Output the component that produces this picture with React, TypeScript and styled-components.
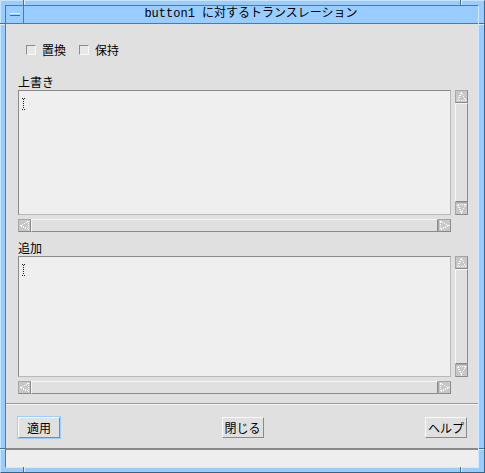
import styled, { createGlobalStyle } from "styled-components";

const GlobalStyle = createGlobalStyle`
  html, body {
    margin: 0;
    padding: 0;
    background: #99ccff;
  }
  body {
    font-family: "Noto Sans CJK JP", "DejaVu Sans", sans-serif;
    font-size: 12px;
    color: #000;
  }
`;

const Frame = styled.div`
  position: relative;
  box-sizing: border-box;
  width: 485px;
  height: 473px;
  background: #99ccff;
  border: 1px solid;
  border-color: #c6e3ff #40607f #40607f #c6e3ff;
  padding: 4px 5px 4px 4px;
  display: flex;
`;

const Notch = styled.div<{ $x: number; $y: number; $v?: boolean }>`
  position: absolute;
  left: ${(p) => p.$x - 1}px;
  top: ${(p) => p.$y - 1}px;
  width: ${(p) => (p.$v ? 2 : 5)}px;
  height: ${(p) => (p.$v ? 5 : 2)}px;
  box-sizing: border-box;
  ${(p) =>
    p.$v
      ? "border-left: 1px solid #4d6c8c; border-right: 1px solid #dcefff;"
      : "border-top: 1px solid #4d6c8c; border-bottom: 1px solid #dcefff;"}
`;

const Window = styled.div`
  flex: 1;
  min-width: 0;
  display: flex;
  flex-direction: column;
  border: 1px solid;
  border-color: #5a7896 #d2e9ff #d2e9ff #5a7896;
`;

const TitleBar = styled.div`
  height: 17px;
  display: flex;
  border-bottom: 1px solid #5a7896;
  background: #99ccff;
`;

const MenuButton = styled.div`
  width: 17px;
  border-right: 1px solid #5a7896;
  display: flex;
  align-items: center;
  justify-content: center;
`;

const MenuBar = styled.div`
  box-sizing: border-box;
  width: 10px;
  height: 3px;
  border-top: 1px solid #e6f3ff;
  border-bottom: 1px solid #4d6c8c;
  background: #99ccff;
`;

const Title = styled.div`
  flex: 1;
  text-align: center;
  line-height: 17px;
  font-family: "Liberation Mono", "Noto Sans CJK JP", monospace;
  font-size: 12px;
  white-space: nowrap;
`;

const Body = styled.div`
  flex: 1;
  display: flex;
  flex-direction: column;
  background: #e0e0e0;
  border-bottom: 2px solid #8a8a8a;
`;

const Content = styled.div`
  display: flex;
  flex-direction: column;
  padding: 18px 10px 0 12px;
`;

const CheckRow = styled.div`
  display: flex;
  align-items: center;
  height: 16px;
  padding-left: 8px;
  gap: 13px;
`;

const CheckItem = styled.label`
  display: flex;
  align-items: center;
  gap: 6px;
  line-height: 16px;
`;

const CheckBox = styled.span`
  box-sizing: border-box;
  width: 10px;
  height: 10px;
  background: #e8e8e8;
  border: 1px solid;
  border-color: #8c8c8c #f8f8f8 #f8f8f8 #8c8c8c;
`;

const Label = styled.div<{ $top: number }>`
  margin-top: ${(p) => p.$top}px;
  height: 17px;
  line-height: 17px;
`;

const TextRow = styled.div<{ $h: number }>`
  display: flex;
  gap: 4px;
  height: ${(p) => p.$h}px;
`;

const TextArea = styled.div`
  flex: 1;
  box-sizing: border-box;
  background: #efefef;
  border: 1px solid;
  border-color: #8a8a8a #b8b8b8 #b8b8b8 #8a8a8a;
  padding: 5px 2px;
`;

const Scroll = styled.div<{ $v?: boolean }>`
  display: flex;
  flex-direction: ${(p) => (p.$v ? "column" : "row")};
  box-sizing: border-box;
  ${(p) => (p.$v ? "width: 13px;" : "height: 13px;")}
  background: #e0e0e0;
`;

const HScrollWrap = styled.div`
  margin-top: 4px;
  margin-right: 17px;
`;

const Arrow = styled.div`
  box-sizing: border-box;
  width: 13px;
  height: 13px;
  flex: none;
  background: #c8c8c8;
  border: 1px solid;
  border-color: #a6a6a6 #8a8a8a #8a8a8a #a6a6a6;
  display: flex;
  align-items: center;
  justify-content: center;
`;

const Thumb = styled.div`
  flex: 1;
  box-sizing: border-box;
  background: #e0e0e0;
  border: 1px solid;
  border-color: #f6f6f6 #8a8a8a #8a8a8a #f6f6f6;
`;

const Separator = styled.div`
  margin-top: 9px;
  height: 2px;
  box-sizing: border-box;
  border-top: 1px solid #9a9a9a;
  border-bottom: 1px solid #f6f6f6;
`;

const ButtonRow = styled.div`
  display: flex;
  justify-content: space-between;
  padding: 12px 11px 0 12px;
`;

const Button = styled.button<{ $default?: boolean }>`
  box-sizing: border-box;
  width: 42px;
  height: 21px;
  padding: 0;
  background: #e0e0e0;
  border: 1px solid;
  border-color: #fafafa #8a8a8a #8a8a8a #fafafa;
  font-family: "Noto Sans CJK JP", "DejaVu Sans", sans-serif;
  font-size: 12px;
  line-height: 19px;
  color: #000;
  ${(p) => (p.$default ? "box-shadow: 0 0 0 1px #99ccff;" : "")}
`;

const StatusBar = styled.div`
  height: 17px;
  background: #eeeeee;
`;

type Dir = "up" | "down" | "left" | "right";

const pts: Record<Dir, string> = {
  up: "5.5,1.5 9.5,9.5 1.5,9.5",
  down: "1.5,1.5 9.5,1.5 5.5,9.5",
  left: "1.5,5.5 9.5,1.5 9.5,9.5",
  right: "1.5,1.5 9.5,5.5 1.5,9.5",
};

const ArrowIcon = ({ dir }: { dir: Dir }) => (
  <svg width="11" height="11" viewBox="0 0 11 11">
    <polygon
      points={pts[dir]}
      fill="none"
      stroke="#fbfbfb"
      strokeWidth="1"
      strokeDasharray="1 1"
      shapeRendering="crispEdges"
    />
  </svg>
);

const IBeam = () => (
  <svg width="5" height="12" viewBox="0 0 5 12">
    <path d="M0.5 0.5h4M2.5 1v10M0.5 11.5h4" stroke="#222" strokeWidth="1" strokeDasharray="1 1" fill="none" shapeRendering="crispEdges" />
  </svg>
);

const VScroll = () => (
  <Scroll $v>
    <Arrow>
      <ArrowIcon dir="up" />
    </Arrow>
    <Thumb />
    <Arrow>
      <ArrowIcon dir="down" />
    </Arrow>
  </Scroll>
);

const HScroll = () => (
  <HScrollWrap>
    <Scroll>
      <Arrow>
        <ArrowIcon dir="left" />
      </Arrow>
      <Thumb />
      <Arrow>
        <ArrowIcon dir="right" />
      </Arrow>
    </Scroll>
  </HScrollWrap>
);

const notches = [
  { x: 23, y: 0, v: true },
  { x: 460, y: 0, v: true },
  { x: 0, y: 23 },
  { x: 479, y: 23 },
  { x: 0, y: 448 },
  { x: 479, y: 448 },
  { x: 23, y: 467, v: true },
  { x: 460, y: 467, v: true },
];

const App = () => {
  return (
    <>
      <GlobalStyle />
      <Frame>
        {notches.map((n, i) => (
          <Notch key={i} $x={n.x} $y={n.y} $v={n.v} />
        ))}
        <Window>
          <TitleBar>
            <MenuButton>
              <MenuBar />
            </MenuButton>
            <Title>button1 に対するトランスレーション</Title>
          </TitleBar>
          <Body>
            <Content>
              <CheckRow>
                <CheckItem>
                  <CheckBox />
                  置換
                </CheckItem>
                <CheckItem>
                  <CheckBox />
                  保持
                </CheckItem>
              </CheckRow>
              <Label $top={15}>上書き</Label>
              <TextRow $h={125}>
                <TextArea>
                  <IBeam />
                </TextArea>
                <VScroll />
              </TextRow>
              <HScroll />
              <Label $top={7}>追加</Label>
              <TextRow $h={121}>
                <TextArea>
                  <IBeam />
                </TextArea>
                <VScroll />
              </TextRow>
              <HScroll />
            </Content>
            <Separator />
            <ButtonRow>
              <Button $default>適用</Button>
              <Button>閉じる</Button>
              <Button>ヘルプ</Button>
            </ButtonRow>
          </Body>
          <StatusBar />
        </Window>
      </Frame>
    </>
  );
};

export default App;
